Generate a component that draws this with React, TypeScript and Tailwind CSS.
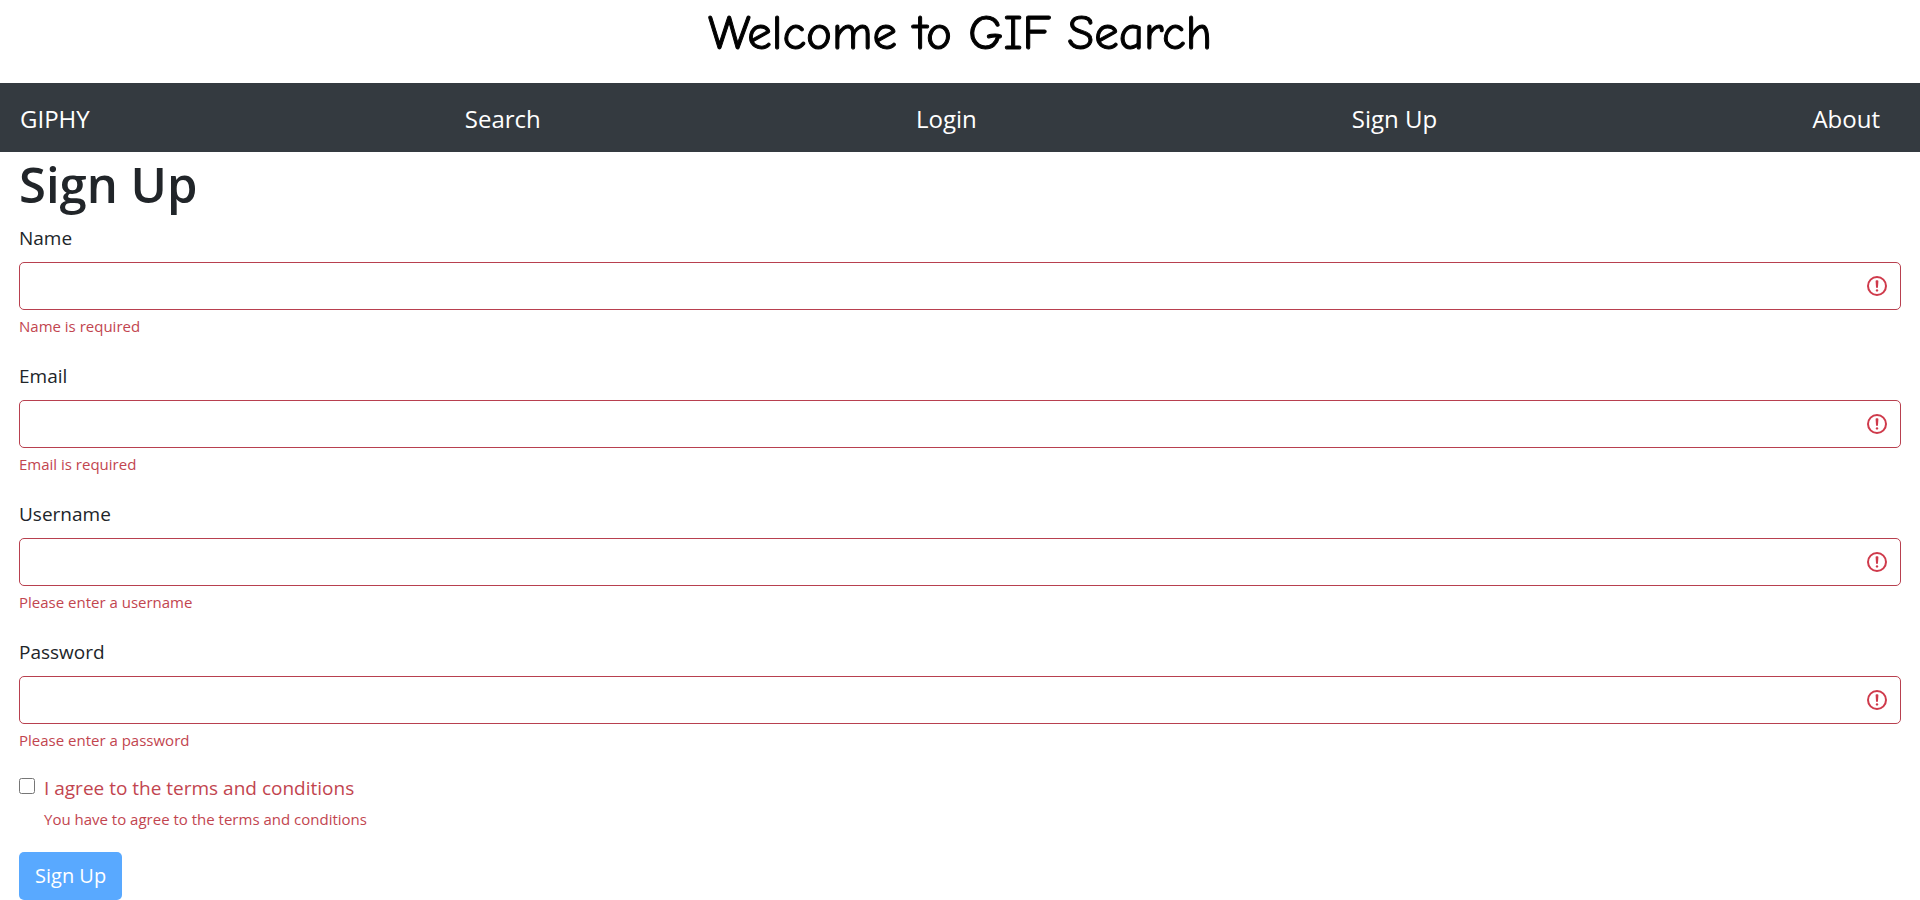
const links = ['GIPHY', 'Search', 'Login', 'Sign Up', 'About'];

const fields = [
  { id: 'name', label: 'Name', type: 'text', error: 'Name is required' },
  { id: 'email', label: 'Email', type: 'email', error: 'Email is required' },
  { id: 'username', label: 'Username', type: 'text', error: 'Please enter a username' },
  { id: 'password', label: 'Password', type: 'password', error: 'Please enter a password' },
];

function AlertIcon() {
  return (
    <svg
      viewBox="0 0 12 12"
      className="pointer-events-none absolute top-1/2 right-3 size-6 -translate-y-1/2"
      fill="none"
      stroke="#cf3a4b"
      aria-hidden="true"
    >
      <circle cx="6" cy="6" r="4.5" />
      <path strokeLinejoin="round" d="M5.8 3.6h.4L6 6.5z" />
      <circle cx="6" cy="8.2" r=".6" fill="#cf3a4b" stroke="none" />
    </svg>
  );
}

function Field({ id, label, type, error }: (typeof fields)[number]) {
  return (
    <div className="mb-[23px]">
      <label htmlFor={id} className="mb-[9px] block text-[19px] leading-[30px]">
        {label}
      </label>
      <div className="relative">
        <input
          id={id}
          name={id}
          type={type}
          aria-invalid="true"
          aria-describedby={`${id}-error`}
          className="block h-12 w-full rounded-[5px] border border-[#b8404f] bg-white pr-12 pl-4 text-[19px] outline-none"
        />
        <AlertIcon />
      </div>
      <p id={`${id}-error`} className="mt-1 text-[15px] leading-6 text-[#c2454f]">
        {error}
      </p>
    </div>
  );
}

export default function App() {
  return (
    <div className="bg-white font-['Segoe_UI','Open_Sans',sans-serif] text-[#212529]">
      <header>
        <h1 className="mb-4 text-center font-['Comic_Sans_MS','Comic_Neue',cursive] text-[49px] leading-[67px] text-black [-webkit-text-stroke:1px_black]">
          Welcome to GIF Search
        </h1>
        <nav className="flex items-center justify-between bg-[#343a40] pt-[17px] pr-10 pb-[15px] pl-5 text-2xl leading-[37px] text-white">
          {links.map((link) => (
            <a key={link} href="#">
              {link}
            </a>
          ))}
        </nav>
      </header>
      <main className="px-[19px]">
        <h2 className="mb-[7px] text-[49px] leading-[64px] font-semibold">Sign Up</h2>
        <form noValidate>
          {fields.map((field) => (
            <Field key={field.id} {...field} />
          ))}
          <div className="mb-[21px] flex items-start gap-[9px]">
            <input
              id="terms"
              type="checkbox"
              aria-invalid="true"
              aria-describedby="terms-error"
              className="mt-[3px] size-4 shrink-0"
            />
            <div className="text-[#c2454f]">
              <label htmlFor="terms" className="block text-[19px] leading-[26px]">
                I agree to the terms and conditions
              </label>
              <p id="terms-error" className="mt-1.5 text-[15px] leading-6">
                You have to agree to the terms and conditions
              </p>
            </div>
          </div>
          <button
            type="submit"
            className="block h-12 rounded-[5px] bg-[#59a9ff] px-4 text-xl leading-[30px] text-white"
          >
            Sign Up
          </button>
        </form>
      </main>
    </div>
  );
}
